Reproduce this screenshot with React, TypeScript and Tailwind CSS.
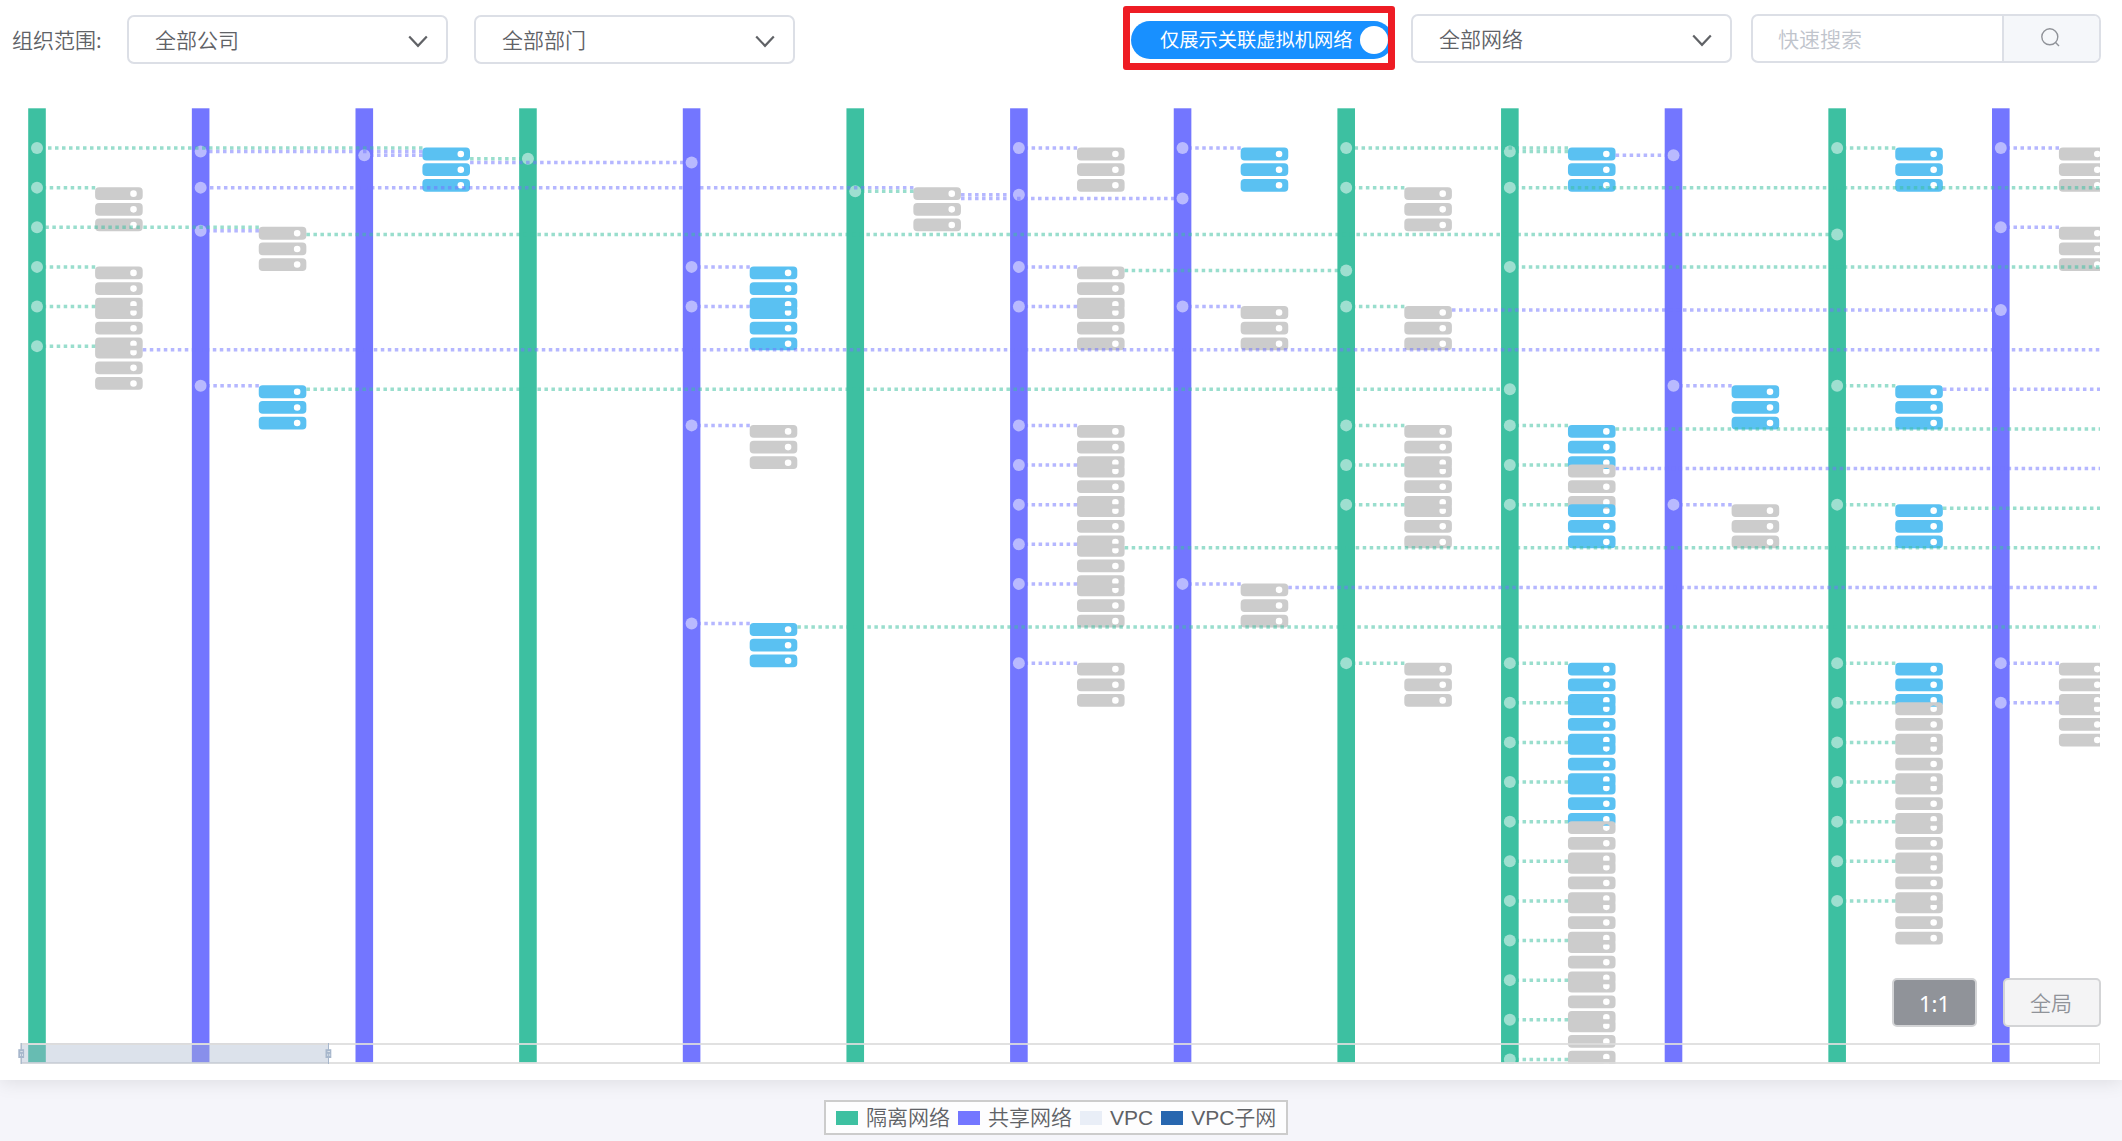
import React from "react";

type Tone = "g" | "p";
type Vm = { col: number; row: number; on?: boolean };
type Link = { row: number; slot: number; net: number; vm: number; tone?: Tone };

const OFF = 14; // column index that lies past the visible right edge
const NET_TONES: Tone[] = ["g", "p", "p", "g", "p", "g", "p", "p", "g", "g", "p", "g", "p"];
const LINE = { g: "#3dc0a1", p: "#7376ff" };
const DOT = { g: "#9edfd0", p: "#b9baff" };

const netX = (c: number) => 37 + 163.65 * c;
const vmX = (c: number) => 118.8 + 163.65 * c;
const rowY = (r: number, slot = 0) => 148 + 39.625 * r + 3.6 * slot;

// Machines attached to the network directly on their left: [column, row, powered on]
const own: [number, number, boolean?][] = [
  [6, 0], [7, 0, true], [11, 0, true], [12, 0],
  [0, 1], [8, 1],
  [12, 2],
  [0, 3], [4, 3, true], [6, 3],
  [0, 4], [4, 4, true], [6, 4], [7, 4], [8, 4],
  [0, 5],
  [1, 6, true], [10, 6, true], [11, 6, true],
  [4, 7], [6, 7], [8, 7], [9, 7, true],
  [6, 8], [8, 8], [9, 8],
  [6, 9], [8, 9], [9, 9, true], [10, 9], [11, 9, true],
  [6, 10], [6, 11], [7, 11], [4, 12, true],
  [6, 13], [8, 13], [9, 13, true], [11, 13, true], [12, 13],
  [9, 14, true], [11, 14], [12, 14],
  [9, 15, true], [11, 15],
  [9, 16, true], [11, 16],
  [9, 17], [11, 17], [9, 18], [11, 18], [9, 19], [11, 19],
  [9, 20], [9, 21], [9, 22], [9, 23],
];

const vms: Vm[] = [
  { col: 2, row: 0, on: true },
  { col: 9, row: 0, on: true },
  { col: 5, row: 1 },
  { col: 1, row: 2 },
  ...own.map(([col, row, on]) => ({ col, row, on })),
];

const links: Link[] = [
  { row: 0, slot: 0, net: 0, vm: 2 },
  { row: 0, slot: 1, net: 1, vm: 2 },
  { row: 0, slot: 2, net: 2, vm: 2 },
  { row: 0, slot: 3, net: 3, vm: 2 },
  { row: 0, slot: 4, net: 4, vm: 2 },
  { row: 0, slot: 0, net: 8, vm: 9 },
  { row: 0, slot: 1, net: 9, vm: 9 },
  { row: 0, slot: 2, net: 10, vm: 9 },
  { row: 1, slot: 0, net: 1, vm: 5 },
  { row: 1, slot: 1, net: 5, vm: 5 },
  { row: 1, slot: 2, net: 6, vm: 5 },
  { row: 1, slot: 3, net: 7, vm: 5 },
  { row: 1, slot: 0, net: 9, vm: OFF },
  { row: 2, slot: 0, net: 0, vm: 1 },
  { row: 2, slot: 1, net: 1, vm: 1 },
  { row: 2, slot: 2, net: 11, vm: 1 },
  { row: 3, slot: 1, net: 8, vm: 6 },
  { row: 3, slot: 0, net: 9, vm: OFF },
  { row: 4, slot: 1, net: 12, vm: 8 },
  { row: 5, slot: 1, net: OFF, vm: 0, tone: "p" },
  { row: 6, slot: 1, net: 9, vm: 1 },
  { row: 6, slot: 1, net: OFF, vm: 11, tone: "p" },
  { row: 7, slot: 1, net: OFF, vm: 9, tone: "g" },
  { row: 8, slot: 1, net: OFF, vm: 9, tone: "p" },
  { row: 9, slot: 1, net: OFF, vm: 11, tone: "g" },
  { row: 10, slot: 1, net: OFF, vm: 6, tone: "g" },
  { row: 11, slot: 1, net: OFF, vm: 7, tone: "p" },
  { row: 12, slot: 1, net: OFF, vm: 4, tone: "g" },
  ...own.map(([col, row]) => ({ row, slot: 0, net: col, vm: col })),
];

const unit = (y: number) =>
  `M4 ${y}H43.6a4 4 0 0 1 4 4v4.8a4 4 0 0 1-4 4H4a4 4 0 0 1-4-4v-4.8a4 4 0 0 1 4-4z` +
  `M38.4 ${y + 3.1}a3.3 3.3 0 1 0 0 6.6a3.3 3.3 0 1 0 0-6.6z`;
const SERVER = unit(0) + unit(15.7) + unit(31.3);

function Topology() {
  const sorted = [...vms].sort((a, b) => a.row - b.row);
  return (
    <svg className="block" width={2100} height={985} viewBox="0 79 2100 985">
      {NET_TONES.map((t, c) => (
        <rect key={c} x={netX(c) - 8.8} y={108.3} width={17.6} height={954.4} fill={LINE[t]} />
      ))}
      {links.filter((l) => l.net !== OFF).map((l, i) => (
        <circle key={i} cx={netX(l.net)} cy={rowY(l.row, l.slot)} r={6} fill={DOT[NET_TONES[l.net]]} />
      ))}
      <g fillRule="evenodd">
        {sorted.map((v, i) => (
          <path
            key={i}
            d={SERVER}
            fill={v.on ? "#5ac1f2" : "#cccccc"}
            transform={`translate(${vmX(v.col) - 23.7} ${rowY(v.row) - 0.4})`}
          />
        ))}
      </g>
      <g strokeWidth={3.5} strokeDasharray="3.5 3.5" opacity={0.52}>
        {links.map((l, i) => {
          const toRight = l.net > l.vm;
          const x1 = vmX(l.vm) + (toRight ? 24 : -23.6);
          const x2 = netX(l.net) + (toRight ? -6 : 6);
          const y = rowY(l.row, l.slot);
          return <path key={i} d={`M${x1} ${y}H${x2}`} stroke={LINE[l.tone ?? NET_TONES[l.net]]} />;
        })}
      </g>
      <rect x={21} y={1044} width={2079} height={19} fill="none" stroke="#dddddd" strokeWidth={1.75} />
      <rect x={21} y={1043.5} width={307.5} height={20} fill="#a7b7cc" fillOpacity={0.4} />
      <path d="M21 1044H328" stroke="#dddddd" strokeWidth={1.75} />
      {[21.3, 328.5].map((x) => (
        <g key={x}>
          <path d={`M${x} 1043V1064`} stroke="#a7b7cc" strokeWidth={1} />
          <rect x={x - 3} y={1049.2} width={5.8} height={8.8} fill="#a7b7cc" />
          <path d={`M${x - 1} 1051.5H${x + 1.5}M${x - 0.8} 1053.8V1056M${x + 1.2} 1053.8V1056`} stroke="#d6dee8" strokeWidth={1} />
        </g>
      ))}
    </svg>
  );
}

function Select({ label }: { label: string }) {
  return (
    <div className="flex h-[49px] w-[321px] items-center justify-between rounded-[7px] border-2 border-[#dcdfe6] bg-white pr-[18px] pl-[26px]">
      <span className="leading-none">{label}</span>
      <svg className="mt-1" width="20" height="13" viewBox="0 0 20 13" fill="none" stroke="#606266" strokeWidth="2.2">
        <path d="M1.2 1.6L10 10.8L18.8 1.6" />
      </svg>
    </div>
  );
}

const legend = [
  { label: "隔离网络", swatch: "bg-[#3dc0a1]" },
  { label: "共享网络", swatch: "bg-[#7376ff]" },
  { label: "VPC", swatch: "bg-[#e9eef7]" },
  { label: "VPC子网", swatch: "bg-[#2766af]" },
];

export default function App() {
  return (
    <div className="flex h-[1141px] w-[2122px] flex-col overflow-hidden bg-[#f5f5fa] font-['Noto_Sans_CJK_SC',sans-serif] text-[21px] font-[350] text-[#606266]">
      <main className="relative h-[1080px] shrink-0 bg-white shadow-[0_2px_18px_rgba(0,0,0,0.1)]">
        <header className="flex h-[79px] items-start">
          <div className="flex items-center pt-[15px] pl-3">
            <span className="w-[115px] leading-none">组织范围:</span>
            <Select label="全部公司" />
            <div className="w-[26px]" />
            <Select label="全部部门" />
          </div>
          <div className="mt-1.5 ml-[328px] flex h-16 w-[272px] items-center overflow-hidden rounded-[3px] border-7 border-[#ee1c24]">
            <div className="mt-1 ml-px flex h-[38px] w-[262px] shrink-0 items-center rounded-full bg-[#1890ff] pl-[29px] text-[19.25px] font-normal text-white">
              <span className="w-[200px] leading-none whitespace-nowrap">仅展示关联虚拟机网络</span>
              <span className="size-7 shrink-0 rounded-full bg-white" />
            </div>
          </div>
          <div className="mt-3.5 ml-4 flex">
            <Select label="全部网络" />
            <div className="ml-[19px] flex h-[49px] w-[350px] overflow-hidden rounded-[7px] border-2 border-[#dcdfe6]">
              <div className="flex flex-1 items-center pl-[25px] leading-none text-[#c0c4cc]">快速搜索</div>
              <div className="flex w-[97px] items-center justify-center border-l-2 border-[#dcdfe6] bg-[#f5f7fa]">
                <svg className="-mt-0.5 -ml-0.5" width="21" height="21" viewBox="0 0 21 21" fill="none" stroke="#909399" strokeWidth="1.4">
                  <circle cx="9.8" cy="9.8" r="8" />
                  <path d="M15.6 15.6L19 19" />
                </svg>
              </div>
            </div>
          </div>
        </header>
        <Topology />
        <div className="absolute top-[978px] right-[21px] flex gap-[26px]">
          <button className="h-[49px] w-[85px] rounded-[5px] border-2 border-[#d3d4d6] bg-[#909399] font-['Noto_Sans',sans-serif] text-[22px] leading-none font-normal text-white">1:1</button>
          <button className="h-[49px] w-[98px] rounded-[5px] border-2 border-[#d3d4d6] bg-[#f4f4f5] pr-0.5 leading-none text-[#909399]">全局</button>
        </div>
      </main>
      <footer className="relative mt-5 ml-[824px] flex h-[35px] w-[464px] items-center gap-2 border-2 border-[#cccccc] bg-[#fdfdfe] pl-2.5 font-['Liberation_Sans','Noto_Sans_CJK_SC',sans-serif] leading-none">
        {legend.map((l) => (
          <div key={l.label} className="flex items-center gap-2 whitespace-nowrap">
            <span className={`h-3.5 w-[22px] ${l.swatch}`} />
            <span>{l.label}</span>
          </div>
        ))}
      </footer>
    </div>
  );
}
